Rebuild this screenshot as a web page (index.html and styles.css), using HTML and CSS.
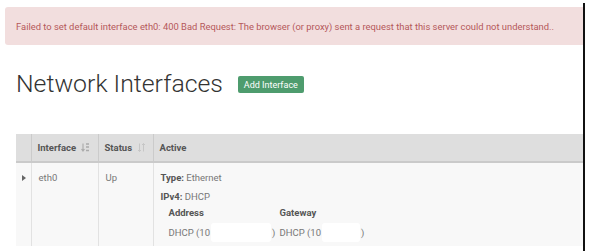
FILE: index.html
```html
<!DOCTYPE html>
<html lang="en">
	<head>
		<meta charset="UTF-8" />
		<meta name="viewport" content="width=device-width, initial-scale=1.0" />
		<title>Network Interfaces</title>
		<link rel="stylesheet" href="styles.css">
	</head>
	<body>
		<div class="frame">
			<div class="alert">
				Failed to set default interface eth0: 400 Bad Request: The browser (or proxy) sent a request that this server could not understand..
			</div>

			<div class="page-head">
				<h1>Network Interfaces</h1>
				<button class="add-btn">Add Interface</button>
			</div>

			<table class="iface-table">
				<thead>
					<tr>
						<th class="col-toggle"></th>
						<th class="col-name">
							Interface
							<svg class="sort-icon active" width="9" height="9" viewBox="0 0 9 9">
								<path d="M2 0.5v7M0.5 6l1.5 2 1.5-2" fill="none" stroke="currentColor" stroke-width="1.1" />
								<path d="M5 1h3M5 4h3M5 7.5h3" stroke="currentColor" stroke-width="1.3" />
							</svg>
						</th>
						<th class="col-status">
							Status
							<svg class="sort-icon" width="9" height="9" viewBox="0 0 9 9">
								<path d="M2.5 0.5v8M1 7l1.5 1.5L4 7M6.5 8.5v-8M5 2l1.5-1.5L8 2" fill="none" stroke="currentColor" stroke-width="1" />
							</svg>
						</th>
						<th class="col-active">Active</th>
					</tr>
				</thead>
				<tbody>
					<tr>
						<td class="col-toggle"><span class="caret"></span></td>
						<td>eth0</td>
						<td>Up</td>
						<td>
							<div class="detail-line"><strong>Type:</strong> Ethernet</div>
							<div class="detail-line"><strong>IPv4:</strong> DHCP</div>
							<div class="addr-grid">
								<div class="addr-label">Address</div>
								<div class="addr-label">Gateway</div>
								<div class="addr-value">DHCP (10<span class="redact wide"></span>)</div>
								<div class="addr-value">DHCP (10<span class="redact"></span>)</div>
							</div>
						</td>
					</tr>
				</tbody>
			</table>
		</div>
	</body>
</html>
```

FILE: styles.css
```css
body {
	margin: 0;
	font-family: Roboto, "Noto Sans", sans-serif;
	background-color: #ffffff;
	color: #333;
}

.frame {
	width: 583px;
	height: 248px;
	margin-top: 3px;
	border-right: 2px solid #111;
	box-sizing: content-box;
	overflow: hidden;
}

.alert {
	margin: 4px 0 0 5px;
	height: 38px;
	padding: 0 11px;
	display: flex;
	align-items: center;
	background-color: #f2dede;
	color: #b5585a;
	font-size: 9.4px;
	border-radius: 3px 0 0 3px;
	white-space: nowrap;
}

.page-head {
	display: flex;
	align-items: center;
	gap: 15px;
	padding-left: 16px;
	height: 34px;
	margin-top: 21px;
}

.page-head h1 {
	margin: 0;
	font-size: 24.8px;
	font-weight: 300;
	color: #333;
}

.add-btn {
	background-color: #4e9c6e;
	color: #fff;
	border: none;
	border-radius: 2px;
	font-family: inherit;
	font-size: 9px;
	height: 17px;
	padding: 0 6px;
	margin-top: 3px;
}

.iface-table {
	margin: 34px 0 0 16px;
	width: 567px;
	border-collapse: collapse;
	font-size: 9.5px;
	table-layout: fixed;
}

.iface-table th {
	background-color: #dedede;
	color: #555;
	font-weight: bold;
	text-align: left;
	height: 28px;
	padding: 0 6px;
	border-left: 1px solid #cbcbcb;
	border-bottom: 2px solid #cacaca;
	box-sizing: border-box;
	white-space: nowrap;
}

.iface-table th:first-child {
	border-left: none;
}

.col-toggle {
	width: 15px;
}

.col-name {
	width: 67px;
}

.col-status {
	width: 55px;
}

.sort-icon {
	color: #c6c6c6;
	margin-left: 3px;
	vertical-align: -1px;
}

.sort-icon.active {
	color: #aaa;
}

.iface-table td {
	background-color: #f8f8f8;
	color: #777;
	vertical-align: top;
	padding: 9px 7px 4px;
	border-left: 1px solid #e2e2e2;
	height: 79px;
	box-sizing: border-box;
}

.iface-table td:first-child {
	border-left: none;
	padding: 9px 0 0 6px;
}

.caret {
	display: inline-block;
	width: 0;
	height: 0;
	border-top: 3px solid transparent;
	border-bottom: 3px solid transparent;
	border-left: 4px solid #666;
}

.detail-line {
	height: 19px;
}

.detail-line strong {
	color: #555;
}

.addr-grid {
	display: grid;
	grid-template-columns: 111px auto;
	padding-left: 8px;
	margin-top: -3px;
}

.addr-label {
	font-weight: bold;
	color: #555;
	height: 15px;
}

.addr-value {
	display: flex;
	align-items: center;
	height: 20px;
}

.redact {
	display: inline-block;
	width: 60px;
	height: 19px;
	background: #fff;
	border-radius: 3px;
	margin: 0 1px 0 1px;
}

.redact.wide {
	width: 60px;
}

.addr-value + .addr-value .redact {
	width: 38px;
}
```
